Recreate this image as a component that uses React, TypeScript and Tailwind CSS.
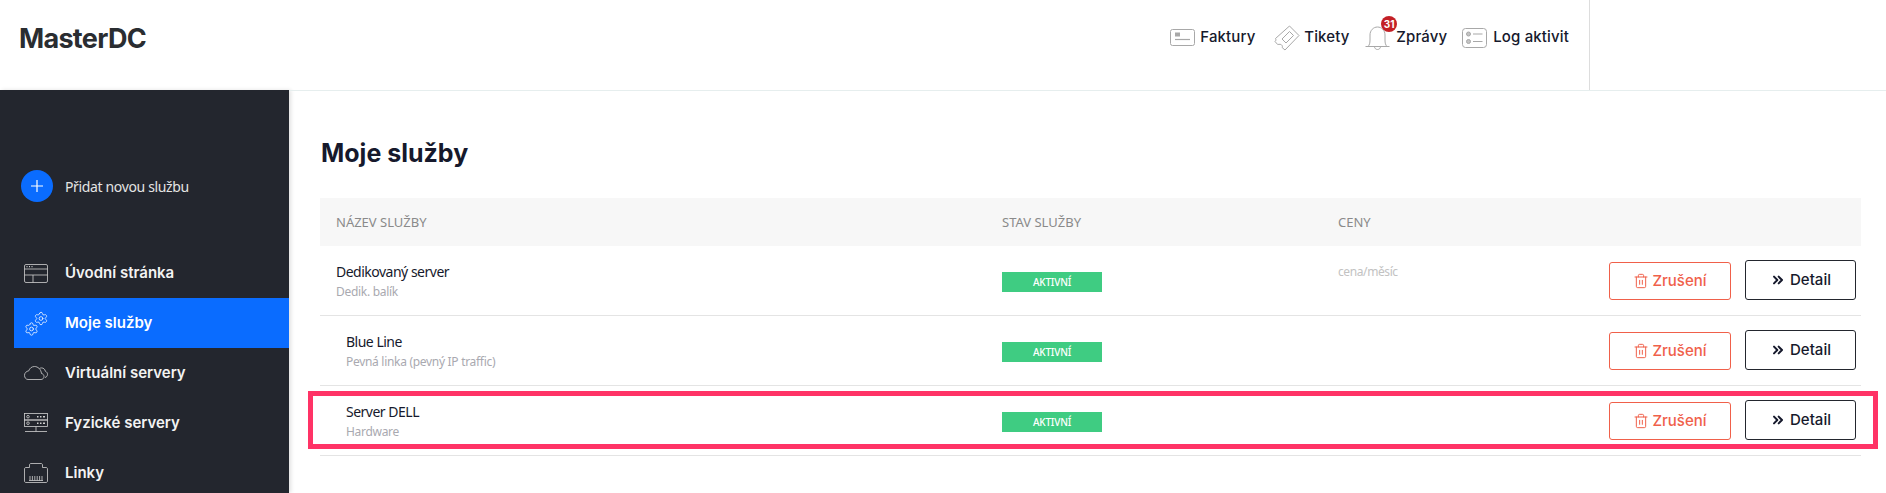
import { ChevronsRight, Settings, Trash2 } from 'lucide-react';
import * as React from 'react';

const HEAD_FONT = "font-['Inter',sans-serif]";
const BODY_FONT = "font-['Noto_Sans',sans-serif]";

const DashboardIcon = () => (
	<svg width="24" height="19" viewBox="0 0 24 19" fill="none" stroke="currentColor" strokeWidth="0.8">
		<rect x="0.5" y="0.5" width="23" height="18" rx="1.5" />
		<path d="M0.5 5h23M0.5 11h23M9 11v7.500" />
		<path d="M2.500 2.700h1M5 2.700h1M7.500 2.700h1" strokeWidth="1.200" />
	</svg>
);

const GearsIcon = () => (
	<svg width="24" height="25" viewBox="0 0 24 25" fill="none">
		<Settings x={9.500} y={0} size={15} strokeWidth={1.200} />
		<Settings x={0} y={10.500} size={15} strokeWidth={1.200} />
	</svg>
);

const CloudIcon = () => (
	<svg width="24" height="14" viewBox="0 0 24 14" fill="none" stroke="currentColor" strokeWidth="0.8">
		<path d="M4 13.500h13c1.800 0 3-1.400 3-3 0-1.500-1-2.700-2.500-3C17 3.400 14 .5 10.500 .5 7.800 .5 5.500 2.300 4.800 4.800 2.300 5.200 .5 7 .5 9.300 .5 11.700 2 13.500 4 13.500z" />
		<path d="M15.500 2.500c.6-.4 1.300-.6 2-.6 2 0 3.500 1.400 3.800 3.300 1.300.5 2.200 1.700 2.200 3.100 0 1.600-1 2.900-2.500 3.200" />
	</svg>
);

const ServerIcon = () => (
	<svg width="24" height="20" viewBox="0 0 24 20" fill="none" stroke="currentColor" strokeWidth="0.8">
		<rect x="0.500" y="0.500" width="23" height="6.500" />
		<rect x="0.500" y="7" width="23" height="6.500" />
		<circle cx="4" cy="3.700" r="1.300" />
		<circle cx="4" cy="10.200" r="1.300" />
		<path d="M13 3.700h1.500M16 3.700h1.500M19 3.700h2M13 10.200h1.500M16 10.200h1.500M19 10.200h2" strokeWidth="1.400" />
		<path d="M12 13.500v5M1 18.500h22" />
	</svg>
);

const LineIcon = () => (
	<svg width="24" height="20" viewBox="0 0 24 20" fill="none" stroke="currentColor" strokeWidth="0.8">
		<path d="M2 19.500h20c.9 0 1.500-.6 1.500-1.500V6c0-.9-.6-1.500-1.500-1.500h-3.500V2c0-.9-.6-1.500-1.500-1.500H7C6.100 .5 5.500 1.100 5.500 2v2.500H2C1.100 4.500 .5 5.100 .5 6v12c0 .9.600 1.500 1.500 1.500z" />
		<path d="M5 17.500h14M6 13v4.500M8.400 13v4.500M10.800 13v4.500M13.200 13v4.500M15.600 13v4.500M18 13v4.500" />
	</svg>
);

const InvoiceIcon = () => (
	<svg width="25" height="17" viewBox="0 0 25 17" fill="none" stroke="#a8a8a8" strokeWidth="1">
		<rect x="0.500" y="0.500" width="24" height="16" rx="2" />
		<rect x="5" y="3.500" width="5" height="4" fill="#a8a8a8" stroke="none" />
		<path d="M5 10.500h15" strokeWidth="1.200" />
	</svg>
);

const TicketIcon = () => (
	<svg width="26" height="26" viewBox="0 0 26 26" fill="none" stroke="#a8a8a8" strokeWidth="1">
		<path d="M15.500 1 25 10.500 11 25l-2.800-2.400c.6-1.400-.2-3-2-3.300-1 0-1.700.1-2.500.2L1 16.500c1-.9 1.200-1.900.5-3z" />
		<path d="m15.500 6.500 4 4-7.500 7.500-4-4z" />
	</svg>
);

const BellIcon = () => (
	<svg width="25" height="25" viewBox="0 0 25 25" fill="none" stroke="#a8a8a8" strokeWidth="1">
		<path d="M.5 21.500h24M3 21.500c1.500-1.500 2-3.500 2-6.500V10c0-4.500 3.300-8 7.500-8s7.500 3.500 7.500 8v5c0 3 .5 5 2 6.500" />
		<path d="M9.500 21.500c0 1.800 1.300 3 3 3s3-1.200 3-3" />
	</svg>
);

const LogIcon = () => (
	<svg width="25" height="20" viewBox="0 0 25 20" fill="none" stroke="#a8a8a8" strokeWidth="1">
		<rect x="0.500" y="0.500" width="24" height="19" rx="3" />
		<circle cx="6.500" cy="6" r="2" fill="#c4c4c4" />
		<circle cx="6.500" cy="13.500" r="2" fill="#c4c4c4" />
		<path d="M11 6h9.500M11 13.500h9.500" strokeWidth="1.200" />
	</svg>
);

const topLinks = [
	{ label: 'Faktury', icon: <InvoiceIcon />, gap: 'gap-[5px]', width: 'w-[104px]' },
	{ label: 'Tikety', icon: <TicketIcon />, gap: 'gap-[4px]', width: 'w-[91px]' },
	{ label: 'Zprávy', icon: <BellIcon />, gap: 'gap-[6px]', width: 'w-[97px]', badge: '31' },
	{ label: 'Log aktivit', icon: <LogIcon />, gap: 'gap-[6px]', width: 'w-auto' },
];

const navItems = [
	{ label: 'Úvodní stránka', icon: <DashboardIcon /> },
	{ label: 'Moje služby', icon: <GearsIcon />, active: true },
	{ label: 'Virtuální servery', icon: <CloudIcon /> },
	{ label: 'Fyzické servery', icon: <ServerIcon /> },
	{ label: 'Linky', icon: <LineIcon /> },
];

const services = [
	{ name: 'Dedikovaný server', type: 'Dedik. balík', price: 'cena/měsíc', indent: 'pl-4' },
	{ name: 'Blue Line', type: 'Pevná linka (pevný IP traffic)', indent: 'pl-[26px]' },
	{ name: 'Server DELL', type: 'Hardware', indent: 'pl-[26px]' },
];

const App: React.FunctionComponent = () => {
	return (
		<div className={`h-[493px] overflow-hidden bg-white ${BODY_FONT}`}>
			<header className="flex h-[90px] bg-white">
				<div className={`pl-[19px] pt-[21px] text-[27px] font-bold leading-[36px] tracking-[-0.7px] text-[#2a2d31] ${HEAD_FONT}`}>
					MasterDC
				</div>
				<div className="ml-auto flex">
					<nav className={`flex h-[75px] items-center pr-[20px] text-[15px] font-medium tracking-[0.15px] text-[#16192c] ${HEAD_FONT}`}>
						{topLinks.map((link) => (
							<div key={link.label} className={`relative flex items-center ${link.gap} ${link.width}`}>
								{link.icon}
								<span>{link.label}</span>
								{link.badge && (
									<span className="absolute left-[16px] top-[-9px] flex h-4 w-4 items-center justify-center rounded-full bg-[#c32026] text-[10px] font-bold leading-none tracking-normal text-white">
										{link.badge}
									</span>
								)}
							</div>
						))}
					</nav>
					<div className="w-[297px] border-l border-[#dddddd]" />
				</div>
			</header>

			<div className="flex">
				<aside className="h-[403px] w-[289px] shrink-0 bg-[#23262e] pl-[14px] shadow-[2px_0_4px_rgba(0,0,0,0.12)]">
					<div className="flex items-center gap-3 pl-[7px] pt-[80px] text-[14px] tracking-[-0.35px] text-[#e4e4e4]">
						<div className="flex h-8 w-8 items-center justify-center rounded-full bg-[#0a6cff]">
							<svg width="14" height="14" viewBox="0 0 14 14" stroke="#ffffff" strokeWidth="1.200">
								<path d="M7 1v12M1 7h12" />
							</svg>
						</div>
						<span>Přidat novou službu</span>
					</div>
					<nav className={`mt-[46px] text-[15px] font-semibold text-[#f3f3f3] ${HEAD_FONT}`}>
						{navItems.map((item) => (
							<div
								key={item.label}
								className={`flex h-[50px] items-center ${item.active ? 'bg-[#0a6cff] text-white' : ''}`}
							>
								<div className={`flex w-[51px] justify-start pl-[10px] ${item.active ? 'text-white' : 'text-[#d0d0d0]'}`}>
									{item.icon}
								</div>
								<span>{item.label}</span>
							</div>
						))}
					</nav>
				</aside>

				<main className="min-w-0 flex-1 border-t border-[#e6eeee] pl-[31px] pr-[25px]">
					<h1 className={`pl-[1px] pt-[44px] text-[25px] font-bold leading-[36px] text-[#16192c] ${HEAD_FONT}`}>Moje služby</h1>
					<div className="mt-[27px]">
						<div className="grid h-12 grid-cols-[682px_336px_1fr] items-center bg-[#f7f7f7] pt-[1px] text-[13px] text-[#8a8a8a]">
							<div className="pl-4">NÁZEV SLUŽBY</div>
							<div>STAV SLUŽBY</div>
							<div>CENY</div>
						</div>
						{services.map((service) => (
							<div key={service.name} className="grid h-[70px] grid-cols-[682px_336px_1fr] border-b border-[#e4e4e4]">
								<div className={`pt-4 ${service.indent}`}>
									<div className="text-[14px] leading-5 tracking-[-0.5px] text-[#16192c]">{service.name}</div>
									<div className="text-[12px] leading-5 tracking-[-0.3px] text-[#a9a9b0]">{service.type}</div>
								</div>
								<div className="pt-[26px]">
									<div className="flex h-5 w-[100px] items-center justify-center bg-[#3fcc82] text-[10px] font-medium tracking-[-0.2px] text-white">
										AKTIVNÍ
									</div>
								</div>
								<div className="flex items-start justify-between pr-[5px]">
									<span className="pt-[16px] text-[12px] leading-5 tracking-[-0.4px] text-[#c2c2c2]">{service.price}</span>
									<div className={`flex items-start gap-[14px] pt-[14px] text-[15px] font-medium ${HEAD_FONT}`}>
										<button className="mt-[2px] flex h-[38px] w-[122px] items-center justify-center gap-[3px] rounded-[3px] border border-[#f0604a] text-[#f0604a]">
											<Trash2 size={16} strokeWidth={1.500} />
											Zrušení
										</button>
										<button className="flex h-10 w-[111px] items-center justify-center gap-[4px] rounded-[3px] border border-[#23262e] text-[#16192c]">
											<ChevronsRight size={16} strokeWidth={3} />
											Detail
										</button>
									</div>
								</div>
							</div>
						))}
					</div>
				</main>
			</div>

			{/* annotation drawn over the screenshot */}
			<div className="absolute left-[308px] top-[391px] h-[58px] w-[1570px] border-[5px] border-[#ff3366]" />
		</div>
	);
};

export default App;
